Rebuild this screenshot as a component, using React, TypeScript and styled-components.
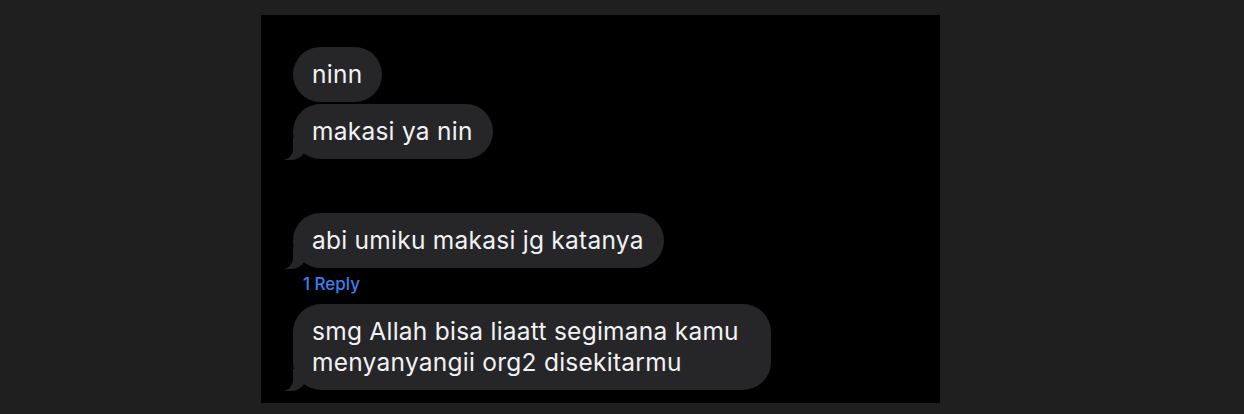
import React from "react";
import styled, { createGlobalStyle } from "styled-components";

const GlobalStyle = createGlobalStyle`
  html, body {
    margin: 0;
    padding: 0;
    background: #1f1f1f;
  }
  body {
    font-family: Inter, "Noto Sans", "Liberation Sans", sans-serif;
    -webkit-font-smoothing: antialiased;
  }
`;

const Page = styled.div`
  width: 1244px;
  height: 414px;
  box-sizing: border-box;
  padding: 15px 0 0 261px;
  background: #1f1f1f;
`;

const Panel = styled.div`
  width: 679px;
  height: 388px;
  box-sizing: border-box;
  background: #000;
  padding: 32px 0 0 32px;
  display: flex;
  flex-direction: column;
  align-items: flex-start;
  overflow: hidden;
`;

const Bubble = styled.div<{ $tail?: boolean; $gap?: number }>`
  position: relative;
  box-sizing: border-box;
  margin-top: ${(p) => p.$gap ?? 0}px;
  background: #262628;
  color: #f2f2f4;
  font-size: 24.5px;
  line-height: 31px;
  letter-spacing: 0.25px;
  padding: 12px 20px 12px 19px;
  border-radius: 28px;
  max-width: 478px;

  ${(p) =>
    p.$tail &&
    `
    &::before {
      content: "";
      position: absolute;
      bottom: -1px;
      left: -8px;
      width: 22px;
      height: 22px;
      background: #262628;
      border-bottom-right-radius: 16px;
    }
    &::after {
      content: "";
      position: absolute;
      bottom: -1px;
      left: -11px;
      width: 11px;
      height: 23px;
      background: #000;
      border-bottom-right-radius: 11px;
    }
  `}
`;

const BubbleText = styled.span`
  position: relative;
  z-index: 1;
`;

const ReplyLink = styled.div`
  margin: 6px 0 0 10px;
  color: #3b80ee;
  font-size: 17px;
  font-weight: 500;
  line-height: 20px;
`;

export default function App() {
  return (
    <>
      <GlobalStyle />
      <Page>
        <Panel>
          <Bubble>
            <BubbleText>ninn</BubbleText>
          </Bubble>
          <Bubble $tail $gap={2}>
            <BubbleText>makasi ya nin</BubbleText>
          </Bubble>
          <Bubble $tail $gap={54}>
            <BubbleText>abi umiku makasi jg katanya</BubbleText>
          </Bubble>
          <ReplyLink>1 Reply</ReplyLink>
          <Bubble $tail $gap={10}>
            <BubbleText>smg Allah bisa liaatt segimana kamu menyanyangii org2 disekitarmu</BubbleText>
          </Bubble>
        </Panel>
      </Page>
    </>
  );
}
